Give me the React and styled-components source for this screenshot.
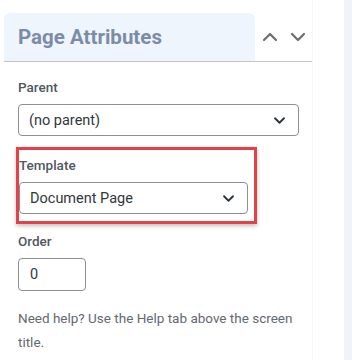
import React from "react";
import styled, { createGlobalStyle } from "styled-components";

const Global = createGlobalStyle`
  html, body { margin: 0; padding: 0; background: #fff; }
  body { font-family: Roboto, "Liberation Sans", sans-serif; }
`;

const Page = styled.div`
  display: flex;
  width: 352px;
  height: 360px;
`;

const Panel = styled.div`
  width: 313px;
  border-right: 1px solid #f4f5f7;
  box-sizing: border-box;
  padding-top: 13px;
`;

const Spacer = styled.div`
  width: 31px;
`;

const Strip = styled.div`
  flex: 1;
  background: #f0f3f8;
`;

const Header = styled.div`
  display: flex;
  align-items: center;
  margin-left: 4px;
  width: 308px;
  border-bottom: 1px solid #c3c4c7;
`;

const TitleBox = styled.div`
  width: 251px;
  height: 48px;
  box-sizing: border-box;
  background: #eff5fc;
  border-radius: 6px 6px 0 0;
  padding-left: 14px;
  display: flex;
  align-items: center;
  font-size: 20.5px;
  font-weight: 700;
  color: #7d8ca6;
`;

const Arrows = styled.div`
  display: flex;
  gap: 8px;
  margin-left: 5px;
`;

const ArrowBtn = styled.span`
  width: 20px;
  height: 20px;
  display: flex;
  align-items: center;
  justify-content: center;
`;

const Body = styled.div`
  padding: 17px 0 0 18px;
`;

const Label = styled.div`
  font-size: 13.5px;
  font-weight: 500;
  color: #50575e;
  margin-bottom: 9px;
`;

const Select = styled.div`
  width: ${(p) => p.$w}px;
  height: 32px;
  box-sizing: border-box;
  border: 1px solid #8c8f94;
  border-radius: 4px;
  display: flex;
  align-items: center;
  justify-content: space-between;
  padding: 0 12px 0 10px;
  font-size: 14.5px;
  color: #32373c;
  background: #fff;
`;

const Field = styled.div`
  margin-bottom: ${(p) => p.$mb || 0}px;
`;

const Highlight = styled.div`
  margin-left: -2px;
  width: 241px;
  box-sizing: border-box;
  border: 3px solid #e4424a;
  box-shadow: 0 2px 4px rgba(0, 0, 0, 0.25);
  padding: 7px 0 7px 0;
  margin-top: 11px;
  margin-bottom: 9px;
`;

const Input = styled.div`
  width: 68px;
  height: 33px;
  box-sizing: border-box;
  border: 1px solid #8c8f94;
  border-radius: 4px;
  display: flex;
  align-items: center;
  padding-left: 11px;
  font-size: 14.5px;
  color: #32373c;
`;

const Help = styled.p`
  margin: 15px 0 0 0;
  width: 295px;
  font-size: 13.5px;
  line-height: 24px;
  color: #646970;
`;

const Chevron = ({ up, color = "#50575e", size = 12, weight = 2.2 }) => (
  <svg width={size + 4} height={size} viewBox="0 0 16 12" fill="none">
    <path
      d={up ? "M2 9 L8 3 L14 9" : "M2 3 L8 9 L14 3"}
      stroke={color}
      strokeWidth={weight}
      strokeLinecap="round"
      strokeLinejoin="round"
    />
  </svg>
);

const App = () => (
  <>
    <Global />
    <Page>
      <Panel>
        <Header>
          <TitleBox>Page Attributes</TitleBox>
          <Arrows>
            <ArrowBtn>
              <Chevron up color="#6b6e72" />
            </ArrowBtn>
            <ArrowBtn>
              <Chevron color="#6b6e72" />
            </ArrowBtn>
          </Arrows>
        </Header>
        <Body>
          <Field>
            <Label>Parent</Label>
            <Select $w={281}>
              <span>(no parent)</span>
              <Chevron size={9} color="#2c3338" weight={2.4} />
            </Select>
          </Field>
          <Highlight>
            <Label>Template</Label>
            <Select $w={229}>
              <span>Document Page</span>
              <Chevron size={9} color="#2c3338" weight={2.4} />
            </Select>
          </Highlight>
          <Field>
            <Label>Order</Label>
            <Input>0</Input>
          </Field>
          <Help>Need help? Use the Help tab above the screen title.</Help>
        </Body>
      </Panel>
      <Spacer />
      <Strip />
    </Page>
  </>
);

export default App;
